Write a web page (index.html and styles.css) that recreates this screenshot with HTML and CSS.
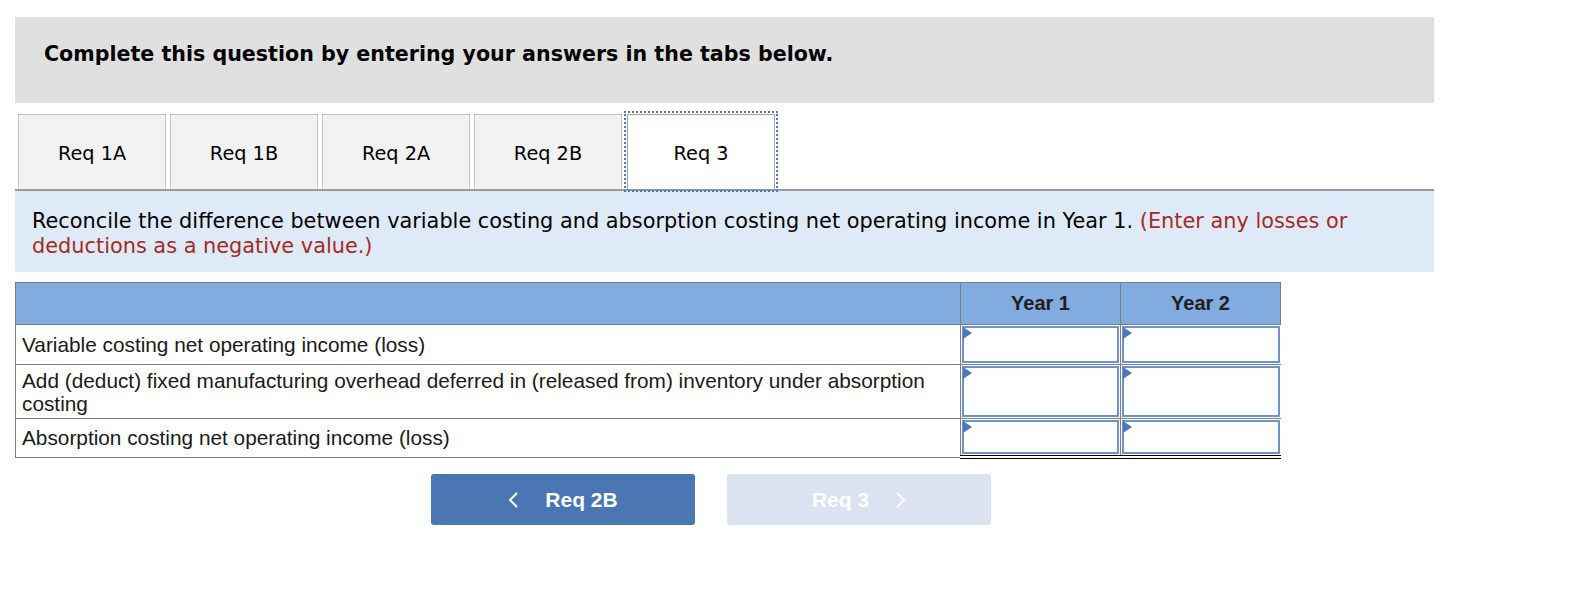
FILE: index.html
```html
<!DOCTYPE html>
<html>
<head>
<meta charset="utf-8">
<link rel="stylesheet" href="styles.css">
</head>
<body>
<div class="page">
  <div class="banner">Complete this question by entering your answers in the tabs below.</div>
  <div class="tabs">
    <div class="tab">Req 1A</div>
    <div class="tab">Req 1B</div>
    <div class="tab">Req 2A</div>
    <div class="tab">Req 2B</div>
    <div class="tab active">Req 3</div>
  </div>
  <div class="instructions">Reconcile the difference between variable costing and absorption costing net operating income in Year 1. <span class="note">(Enter any losses or deductions as a negative value.)</span></div>
  <table class="grid">
    <thead>
      <tr>
        <th class="label-col"></th>
        <th class="year">Year 1</th>
        <th class="year">Year 2</th>
      </tr>
    </thead>
    <tbody>
      <tr class="r1">
        <td class="label">Variable costing net operating income (loss)</td>
        <td class="cell"><div class="box"><span class="flag"></span></div></td>
        <td class="cell"><div class="box"><span class="flag"></span></div></td>
      </tr>
      <tr class="r2">
        <td class="label">Add (deduct) fixed manufacturing overhead deferred in (released from) inventory under absorption costing</td>
        <td class="cell"><div class="box"><span class="flag"></span></div></td>
        <td class="cell"><div class="box"><span class="flag"></span></div></td>
      </tr>
      <tr class="r3">
        <td class="label">Absorption costing net operating income (loss)</td>
        <td class="cell total"><div class="box"><span class="flag"></span></div></td>
        <td class="cell total"><div class="box"><span class="flag"></span></div></td>
      </tr>
    </tbody>
  </table>
  <div class="nav">
    <div class="btn prev">
      <svg class="chev" width="11" height="16" viewBox="0 0 11 16"><polyline points="9,1 2,8 9,15" fill="none" stroke="#fff" stroke-width="2"/></svg>
      <span class="btn-text">Req 2B</span>
    </div>
    <div class="btn next">
      <span class="btn-text">Req 3</span>
      <svg class="chev" width="11" height="16" viewBox="0 0 11 16"><polyline points="2,1 9,8 2,15" fill="none" stroke="#fff" stroke-width="2"/></svg>
    </div>
  </div>
</div>
</body>
</html>
```
FILE: styles.css
```css
html, body {
  margin: 0;
  padding: 0;
  background: #fff;
}
.page {
  padding: 17px 0 0 15px;
  width: 1419px;
  font-family: "DejaVu Sans", Verdana, sans-serif;
  color: #000;
}
.banner {
  height: 86px;
  box-sizing: border-box;
  background: #e0e0e0;
  padding: 24px 0 0 29px;
  font-weight: bold;
  font-size: 20.6px;
  line-height: 26px;
}
.tabs {
  margin-top: 11px;
  display: flex;
  gap: 4px;
  padding-left: 3px;
  border-bottom: 2px solid #999;
  height: 75px;
}
.tab {
  width: 148px;
  height: 75px;
  box-sizing: border-box;
  padding-top: 3px;
  background: #f2f2f2;
  border: 1px solid #c6c6c6;
  border-bottom: none;
  display: flex;
  align-items: center;
  justify-content: center;
  font-size: 19.3px;
}
.tab.active {
  background: #fff;
  border-color: #a6a6a6;
  margin-left: 1px;
  outline: 2px dotted #4a7bc0;
  outline-offset: 1px;
  position: relative;
  z-index: 1;
}
.instructions {
  background: #deeaf7;
  height: 81px;
  box-sizing: border-box;
  padding: 18px 17px 0 17px;
  font-size: 20.85px;
  line-height: 25px;
}
.note {
  color: #a42b24;
}
.grid {
  margin-top: 10px;
  border-collapse: collapse;
  width: 1266px;
  font-family: "Liberation Sans", Arial, sans-serif;
  font-size: 20.8px;
}
.grid th {
  background: #82abdf;
  border: 1px solid #7c7c7c;
  height: 41px;
  padding: 0;
  font-weight: bold;
  font-size: 20px;
  color: #1f1f1f;
}
.grid th.year {
  width: 159px;
}
.grid td {
  border-top: 1px solid #808080;
  border-bottom: 1px solid #808080;
  padding: 0;
}
.grid td.label {
  border-left: 1px solid #808080;
  padding: 0 6px;
  line-height: 23px;
  color: #1a1a1a;
  vertical-align: middle;
}
.grid td.cell {
  border-left: 1px solid #808080;
  padding: 1px;
  vertical-align: top;
}
.grid td.total {
  border-bottom: 4px double #000;
}
.box {
  position: relative;
  box-sizing: border-box;
  border: 2px solid #6b94cf;
  background: #fff;
}
.r1 .box { height: 37px; }
.r2 .box { height: 51px; }
.r3 .box { height: 34px; }
.flag {
  position: absolute;
  left: -1px;
  top: -1px;
  width: 0;
  height: 0;
  border-top: 6px solid transparent;
  border-bottom: 6px solid transparent;
  border-left: 9px solid #4a78b8;
}
.nav {
  margin-top: 15px;
  padding-left: 416px;
  display: flex;
  gap: 32px;
}
.btn {
  width: 264px;
  height: 51px;
  border-radius: 3px;
  display: flex;
  align-items: center;
  justify-content: center;
  gap: 26px;
  font-family: "Liberation Sans", Arial, sans-serif;
  font-weight: bold;
  font-size: 21px;
  color: #fff;
}
.btn.prev {
  background: #4a76b3;
}
.btn.next {
  background: #dae3ef;
}
.chev {
  display: block;
}
```
